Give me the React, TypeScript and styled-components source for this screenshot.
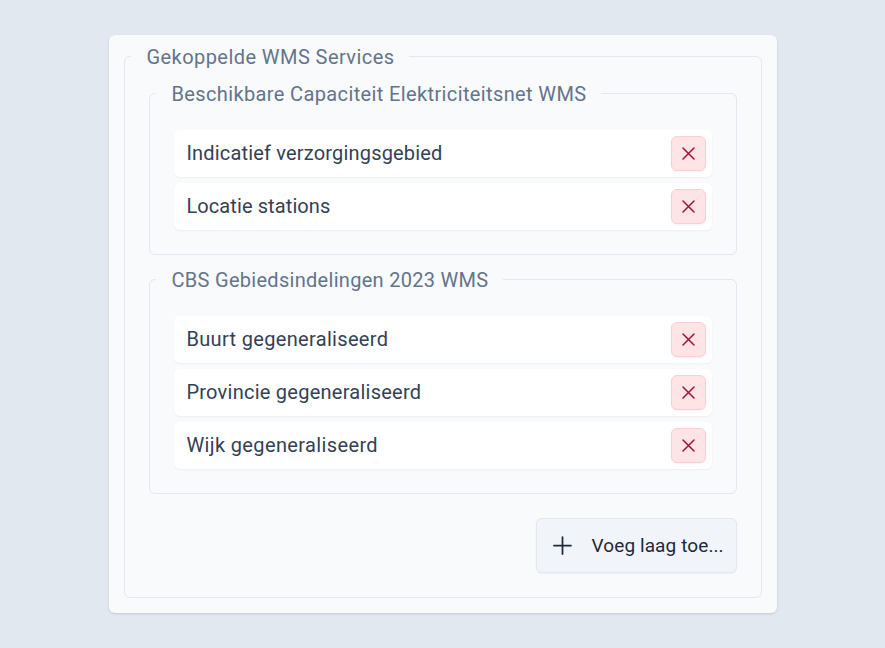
import React from "react";
import styled, { createGlobalStyle } from "styled-components";

const GlobalStyle = createGlobalStyle`
  *, *::before, *::after { box-sizing: border-box; }
  body {
    margin: 0;
    background: #e2e8f0;
    color: #334155;
    font: 400 20px/30px Roboto, "Liberation Sans", sans-serif;
  }
`;

const Page = styled.main`
  display: flex;
  justify-content: center;
  align-items: flex-start;
  min-height: 100vh;
  padding: 35px 108px 35px 109px;
`;

const Card = styled.form`
  width: 100%;
  padding: 6px 15px 15px;
  border-radius: 6px;
  background: #f8fafc;
  box-shadow: 0 1px 3px rgba(0, 0, 0, 0.1), 0 1px 2px -1px rgba(0, 0, 0, 0.1);
`;

const Fieldset = styled.fieldset<{ $top: number }>`
  display: block;
  min-width: 0;
  margin: 0;
  padding: ${({ $top }) => $top}px 24px 24px;
  border: 1px solid #e2e8f0;
  border-radius: 6px;

  & + & {
    margin-top: 9px;
  }
`;

const Legend = styled.legend<{ $tracking: number }>`
  height: 31px;
  margin-left: -18px;
  padding: 1px 14.5px 0 15.5px;
  color: #64748b;
  letter-spacing: ${({ $tracking }) => $tracking}px;
  white-space: nowrap;
`;

const Layers = styled.ul`
  display: flex;
  flex-direction: column;
  gap: 6px;
  margin: 0;
  padding: 0;
  list-style: none;
`;

const Layer = styled.li`
  display: flex;
  align-items: center;
  justify-content: space-between;
  height: 47px;
  padding: 0 6px 0 12px;
  border-radius: 6px;
  background: #fff;
  box-shadow: 0 1px 2px rgba(0, 0, 0, 0.05);
`;

const LayerName = styled.span<{ $tracking: number }>`
  padding: 0 0 2px 0.4px;
  letter-spacing: ${({ $tracking }) => $tracking}px;
`;

const Button = styled.button`
  display: flex;
  align-items: center;
  border-radius: 6px;
  font: inherit;
  box-shadow: 0 1px 2px rgba(0, 0, 0, 0.05);
  cursor: pointer;
`;

const RemoveButton = styled(Button)`
  justify-content: center;
  width: 35px;
  height: 35px;
  padding: 0;
  border: 1px solid #fecdd3;
  background: #ffe4e6;
  color: #9f1239;
`;

const Actions = styled.div`
  display: flex;
  justify-content: flex-end;
  margin-top: 24px;
`;

const AddButton = styled(Button)`
  gap: 19.5px;
  width: 201px;
  height: 55px;
  padding: 0 0 0 16px;
  border: 1px solid #e2e8f0;
  background: #f1f5f9;
  color: #1e293b;
  font-size: 19px;
  letter-spacing: 0.1px;
  white-space: nowrap;
`;

const Icon = styled.svg`
  display: block;
  flex: none;
  fill: none;
  stroke: currentColor;
  stroke-linecap: round;
`;

const services = [
  {
    name: "Beschikbare Capaciteit Elektriciteitsnet WMS",
    tracking: 0.373,
    layers: [
      { name: "Indicatief verzorgingsgebied", tracking: 0.18 },
      { name: "Locatie stations", tracking: 0.1 },
    ],
  },
  {
    name: "CBS Gebiedsindelingen 2023 WMS",
    tracking: 0.29,
    layers: [
      { name: "Buurt gegeneraliseerd", tracking: 0.33 },
      { name: "Provincie gegeneraliseerd", tracking: 0.25 },
      { name: "Wijk gegeneraliseerd", tracking: 0.37 },
    ],
  },
];

export default function App() {
  return (
    <>
      <GlobalStyle />
      <Page>
        <Card>
          <Fieldset $top={6}>
            <Legend $tracking={0.435}>Gekoppelde WMS Services</Legend>
            {services.map((service) => (
              <Fieldset key={service.name} $top={21}>
                <Legend $tracking={service.tracking}>{service.name}</Legend>
                <Layers>
                  {service.layers.map((layer) => (
                    <Layer key={layer.name}>
                      <LayerName $tracking={layer.tracking}>{layer.name}</LayerName>
                      <RemoveButton type="button" aria-label="Verwijder">
                        <Icon width="13" height="13" viewBox="0 0 13 13" strokeWidth="1.5">
                          <path d="M1 1 12 12M12 1 1 12" />
                        </Icon>
                      </RemoveButton>
                    </Layer>
                  ))}
                </Layers>
              </Fieldset>
            ))}
            <Actions>
              <AddButton type="button">
                <Icon width="19" height="19" viewBox="0 0 19 19" strokeWidth="1.75">
                  <path d="M9.5 1V18M1 9.5H18" />
                </Icon>
                Voeg laag toe...
              </AddButton>
            </Actions>
          </Fieldset>
        </Card>
      </Page>
    </>
  );
}
